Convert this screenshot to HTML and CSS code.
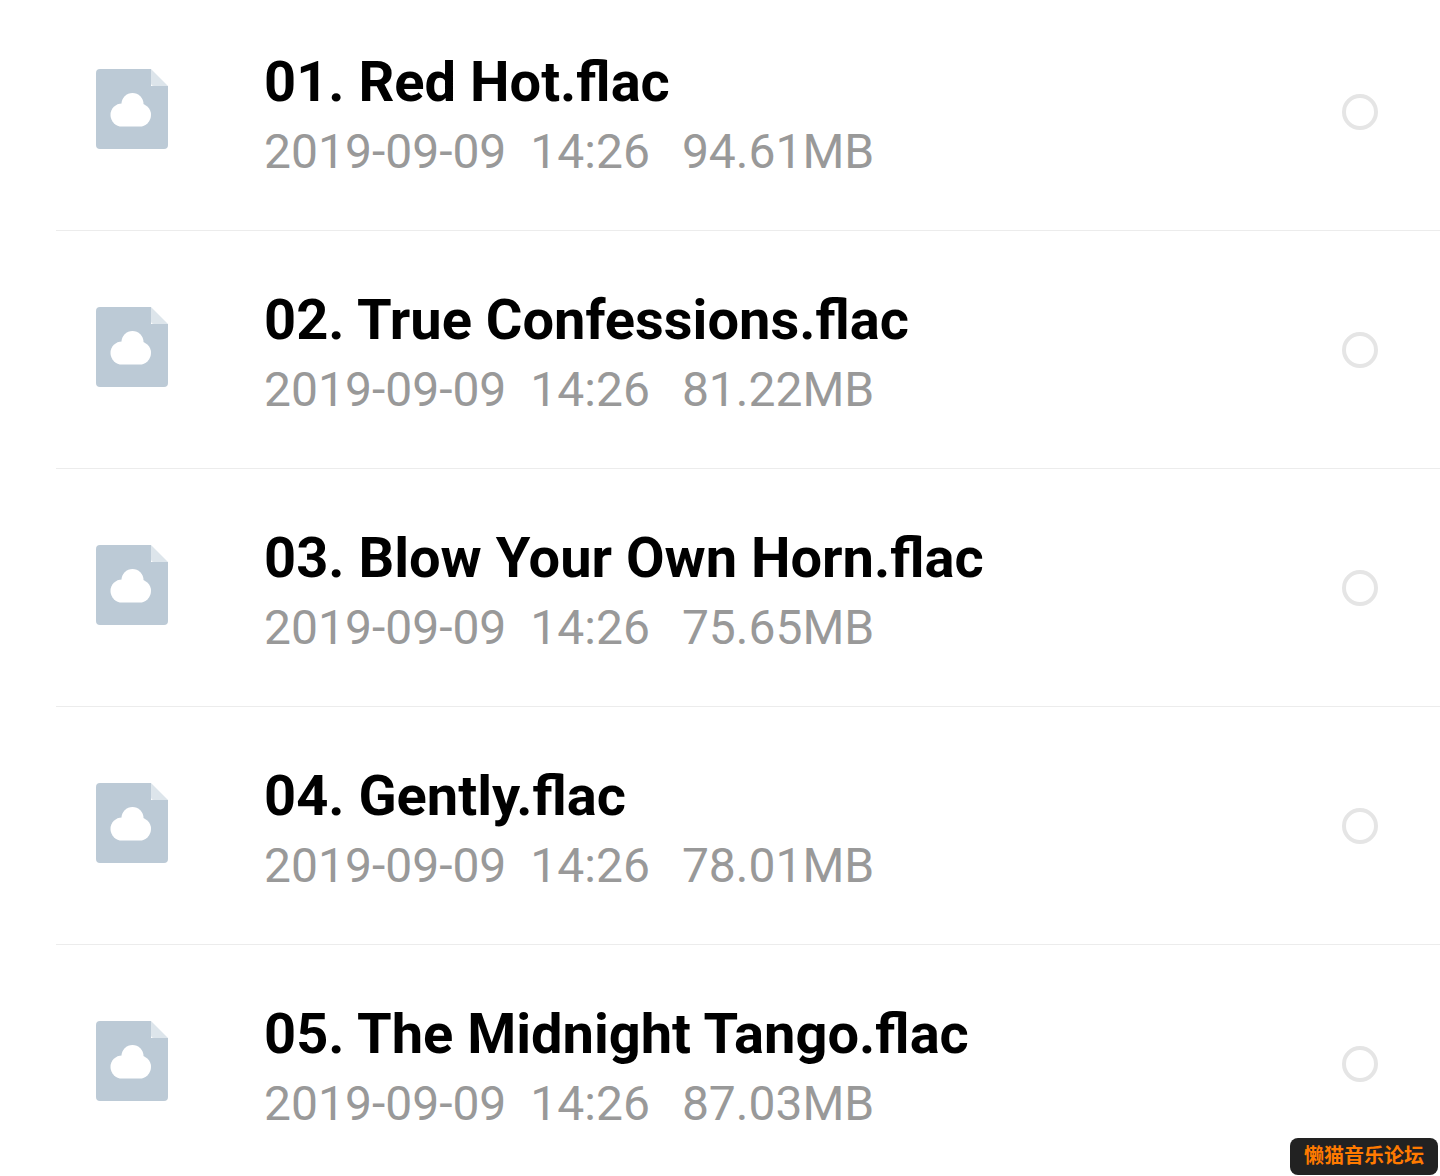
FILE: index.html
```html
<!DOCTYPE html>
<html lang="en">
<head>
    <meta charset="UTF-8">
    <meta name="viewport" content="width=device-width, initial-scale=1.0">
    <title>Files</title>
    <link rel="stylesheet" href="styles.css">
</head>
<body>
    <!-- File icon, shared by all rows -->
    <svg class="icon-defs" aria-hidden="true">
        <symbol id="file-icon" viewBox="0 0 72 80">
            <path fill="#bccad6" d="M4 0H55V17H72V76Q72 80 68 80H4Q0 80 0 76V4Q0 0 4 0Z"/>
            <path fill="#dde5eb" d="M55 0L72 17H58Q55 17 55 14Z"/>
            <g fill="#fff">
                <circle cx="36.500" cy="35" r="11"/>
                <rect x="14.500" y="34.500" width="40.500" height="23" rx="11.500"/>
            </g>
        </symbol>
    </svg>

    <ul class="file-list">
        <li class="file">
            <svg class="file-icon" aria-hidden="true"><use href="#file-icon"/></svg>
            <div class="file-body">
                <label class="file-name" for="file-1">01. Red Hot.flac</label>
                <div class="file-info"><span class="date">2019-09-09</span><span class="time">14:26</span><span>94.61MB</span></div>
            </div>
            <input class="file-check" type="checkbox" id="file-1">
        </li>
        <li class="file">
            <svg class="file-icon" aria-hidden="true"><use href="#file-icon"/></svg>
            <div class="file-body">
                <label class="file-name" for="file-2">02. True Confessions.flac</label>
                <div class="file-info"><span class="date">2019-09-09</span><span class="time">14:26</span><span>81.22MB</span></div>
            </div>
            <input class="file-check" type="checkbox" id="file-2">
        </li>
        <li class="file">
            <svg class="file-icon" aria-hidden="true"><use href="#file-icon"/></svg>
            <div class="file-body">
                <label class="file-name" for="file-3">03. Blow Your Own Horn.flac</label>
                <div class="file-info"><span class="date">2019-09-09</span><span class="time">14:26</span><span>75.65MB</span></div>
            </div>
            <input class="file-check" type="checkbox" id="file-3">
        </li>
        <li class="file">
            <svg class="file-icon" aria-hidden="true"><use href="#file-icon"/></svg>
            <div class="file-body">
                <label class="file-name" for="file-4">04. Gently.flac</label>
                <div class="file-info"><span class="date">2019-09-09</span><span class="time">14:26</span><span>78.01MB</span></div>
            </div>
            <input class="file-check" type="checkbox" id="file-4">
        </li>
        <li class="file">
            <svg class="file-icon" aria-hidden="true"><use href="#file-icon"/></svg>
            <div class="file-body">
                <label class="file-name" for="file-5">05. The Midnight Tango.flac</label>
                <div class="file-info"><span class="date">2019-09-09</span><span class="time">14:26</span><span>87.03MB</span></div>
            </div>
            <input class="file-check" type="checkbox" id="file-5">
        </li>
    </ul>

    <div class="watermark" lang="zh-CN">懒猫音乐论坛</div>
</body>
</html>
```

FILE: styles.css
```css
body {
    margin: 0;
    background-color: #fff;
    font-family: Roboto, "Noto Sans CJK SC", sans-serif;
}
.icon-defs {
    display: none;
}
.file-list {
    list-style: none;
    margin: 0;
    padding: 0 0 0 56px;
}
.file {
    display: flex;
    align-items: flex-start;
    box-sizing: border-box;
    padding: 55px 62px 42px 40px;
    border-bottom: 1px solid #ececec;
}
.file:first-child {
    padding-top: 48px;
}
.file:last-child {
    border-bottom: none;
    padding-bottom: 36px;
}
.file-icon {
    flex: none;
    width: 72px;
    height: 80px;
    margin: 21px 96px 0 0;
}
.file-body {
    flex: 1;
    min-width: 0;
}
.file-name {
    display: block;
    font-size: 56px;
    line-height: 68px;
    font-weight: bold;
    color: #000;
}
.file-info {
    display: flex;
    font-size: 48px;
    line-height: 72px;
    color: #999;
}
.date {
    margin-right: 24px;
}
.time {
    margin-right: 32px;
}
.file-check {
    appearance: none;
    flex: none;
    box-sizing: border-box;
    width: 36px;
    height: 36px;
    margin: 46px 0 0;
    border: 4px solid #e5e5e5;
    border-radius: 50%;
}
.file-check:checked {
    background-color: #bccad6;
}
.watermark {
    position: fixed;
    right: 2px;
    bottom: 1px;
    padding: 0 14px;
    border-radius: 8px;
    background-color: #222;
    color: #ff7a00;
    font-size: 20px;
    line-height: 37px;
    font-weight: bold;
}
```
